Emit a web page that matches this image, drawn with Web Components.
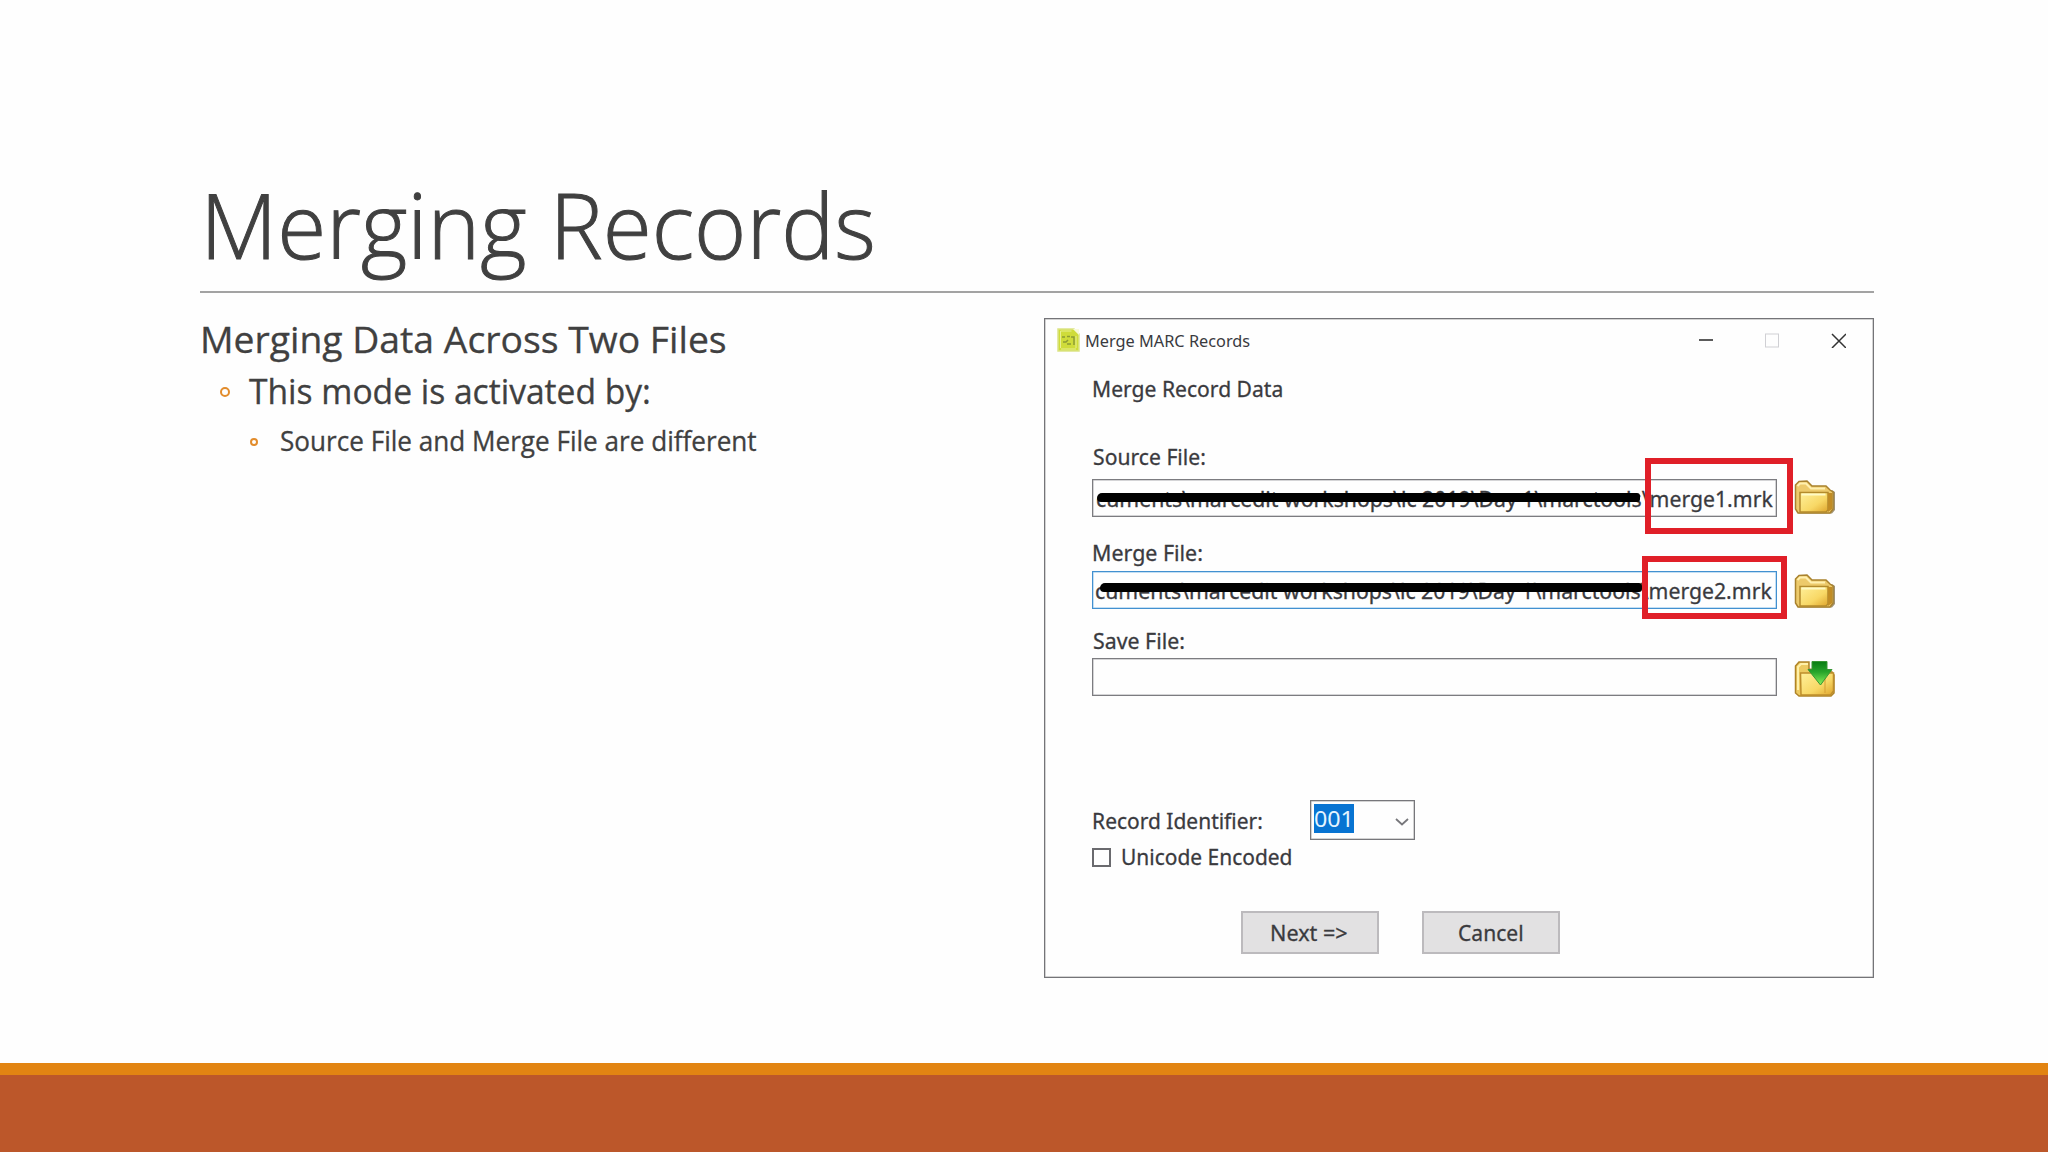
<!DOCTYPE html>
<html lang="en">
<head>
<meta charset="utf-8">
<title>Merging Records</title>
<style>
  html, body { margin: 0; height: 100%; overflow: hidden; background: #fefefe; }
</style>
</head>
<body>
<slide-page>
  <fit-text slot="title" width="663.5" style="height:65px;font:300 91px 'Open Sans',sans-serif;-webkit-text-stroke:1px">Merging Records</fit-text>
  <slide-outline slot="outline"></slide-outline>
  <merge-dialog slot="figure"></merge-dialog>
</slide-page>

<script>
(function() {

  // Build an element class from a chunk of markup
  function define(name, html, setup) {
    const template = document.createElement('template');
    template.innerHTML = html;
    customElements.define(name, class extends HTMLElement {
      constructor() {
        super();
        this.attachShadow({mode: 'open'});
        this.shadowRoot.appendChild(template.content.cloneNode(true));
      }
      connectedCallback() {
        if (setup) setup(this, this.shadowRoot);
      }
    });
  }

  const ctx = document.createElement('canvas').getContext('2d');

  // One line of text. The ink fills the given width, and the bottom
  // of the box is the baseline.
  define('fit-text', `
    <style>
      :host { display: block; flex: none; }
      span { display: block; width: max-content; transform-origin: 0 0; white-space: pre; }
    </style>
    <span><slot></slot></span>
  `, (host, root) => {
    const style = getComputedStyle(host);
    const width = Number(host.getAttribute('width'));
    const height = parseFloat(style.height);
    ctx.font = `${style.fontWeight} ${style.fontSize} ${style.fontFamily}`;
    const m = ctx.measureText(host.textContent);
    const scale = width / (m.actualBoundingBoxRight + m.actualBoundingBoxLeft);
    const dx = m.actualBoundingBoxLeft * scale;
    const dy = (height - m.fontBoundingBoxAscent + m.fontBoundingBoxDescent) / 2;
    const span = root.querySelector('span');
    host.style.width = width + 'px';
    span.style.lineHeight = height + 'px';
    span.style.transform = `translate(${dx}px, ${dy}px) scaleX(${scale})`;
  });

  define('slide-page', `
    <style>
      :host {
        display: flex;
        flex-direction: column;
        box-sizing: border-box;
        width: 2048px;
        height: 1152px;
        color: #404040;
      }
      header {
        height: 97px;
        margin: 194px 174px 0 200px;
        padding-left: 8.5px;
        border-bottom: 2px solid #a3a3a3;
      }
      main {
        flex: 1;
        display: flex;
        justify-content: space-between;
        padding: 25px 174px 0 201px;
      }
      .accent { height: 12px; background: #e28412; }
      .base { height: 77px; background: #bc572a; }
    </style>
    <header><slot name="title"></slot></header>
    <main><slot name="outline"></slot><slot name="figure"></slot></main>
    <div class="accent"></div>
    <div class="base"></div>
  `);

  define('slide-outline', `
    <style>
      :host { display: block; font-family: "Open Sans", sans-serif; -webkit-text-stroke: .3px; }
      div { display: flex; align-items: center; }
      .one { margin: 8px 0 0 1.500px; }
      .two { margin: 26px 0 0 19px; }
      .three { margin: 28px 0 0 49px; }
      .one fit-text { height: 27px; font-size: 37px; }
      .two fit-text { height: 25px; font-size: 34px; }
      .three fit-text { height: 19px; font-size: 27px; }
      i {
        box-sizing: border-box;
        border: 2px solid #e28c2c;
        border-radius: 50%;
      }
      .two i { width: 10px; height: 10px; margin-right: 19px; }
      .three i { width: 8px; height: 8px; margin-right: 23px; }
    </style>
    <div class="one"><fit-text width="522">Merging Data Across Two Files</fit-text></div>
    <div class="two"><i></i><fit-text width="400">This mode is activated by:</fit-text></div>
    <div class="three"><i></i><fit-text width="475">Source File and Merge File are different</fit-text></div>
  `);

  define('app-icon', `
    <style>:host, svg { display: block; }</style>
    <svg width="23" height="24" viewBox="0 0 23 24">
      <path d="M1 1h16l5 5v17H1z" fill="#cfdc3a" stroke="#dce486" stroke-width="1.5"/>
      <path d="M16 1l6 6v-6z" fill="#f8fad8"/>
      <path d="M3.500 3h11M3.500 3v17M4 21h15M19 8v12" stroke="#e8ef92" fill="none"/>
      <path d="M5 9h3M10 8.500h3M14 9h3v8M6 14h3l2-2M10 16h4" stroke="#8d9c34" stroke-width="1.500" fill="none"/>
    </svg>
  `);

  define('folder-icon', `
    <style>
      :host, svg { display: block; }
      .arrow { display: none; }
      :host([save]) .arrow { display: block; }
      :host([save]) .open, .closed { display: none; }
      :host([save]) .closed { display: block; }
    </style>
    <svg width="42" height="38" viewBox="0 0 42 38">
      <defs>
        <linearGradient id="front" x1="0" y1="0" x2="1" y2="1">
          <stop offset="0" stop-color="#fff09a"/>
          <stop offset=".6" stop-color="#f8d866"/>
          <stop offset="1" stop-color="#dfa52c"/>
        </linearGradient>
        <linearGradient id="green" x1="0" y1="0" x2="0" y2="1">
          <stop offset="0" stop-color="#087c12"/>
          <stop offset=".45" stop-color="#28a52b"/>
          <stop offset="1" stop-color="#8cf25a"/>
        </linearGradient>
      </defs>
      <g class="open">
        <path d="M4 34.500L38 34.500L41 31V13l-3-2z" fill="#806f45" opacity=".75"/>
        <path d="M1.500 6L5 2.500L13 2l5 5h14l4 4l3 2v17l-3 4H4L1.500 30z" fill="#edca6b" stroke="#a9822e" stroke-width="1.500"/>
        <path d="M3.500 7L6 4.500h6l5 5h14" fill="none" stroke="#fff0b0" stroke-width="2"/>
        <path d="M6 13.500h28V31l-2 2H6z" fill="url(#front)" stroke="#b48b2c" stroke-width="1.500"/>
        <path d="M34 14l4 0v16l-4 3z" fill="#c18c25"/>
        <path d="M7.500 15.500h24" stroke="#fffac6" stroke-width="2"/>
      </g>
      <g class="closed">
        <path d="M1.500 6L5 2H15v7l23 3 2 3v18l-3 3H5l-3.500-3z" fill="#edca60" stroke="#af8428" stroke-width="1.500"/>
        <path d="M4 30V7l3-3h7" fill="none" stroke="#fff0a8" stroke-width="2"/>
        <path d="M6.500 13h33v18l-3 4H7z" fill="url(#front)" stroke="#bd8d2b" stroke-width="1.500"/>
        <path d="M31 15v18" stroke="#d49d35"/>
      </g>
      <path class="arrow" d="M18 1.500h15v8h5L26.500 25L14 9.500h4z" fill="url(#green)" stroke="#389634"/>
    </svg>
  `);

  define('file-field', `
    <style>
      :host { display: flex; height: 38px; }
      .box {
        position: relative;
        box-sizing: border-box;
        width: 685px;
        border: 1px solid #7c7c80;
        box-shadow: inset 0 0 0 .5px #aaaaae;
        padding: 11px 0 0 4px;
      }
      :host([focused]) .box {
        padding-left: 3px;
        border-color: #4290d0;
        box-shadow: inset 0 0 0 .5px #8ac0e8;
      }
      fit-text { height: 16px; font-size: 22px; }
      .strike {
        position: absolute;
        left: 4px;
        top: 13px;
        width: 543px;
        height: 9px;
        border-radius: 5px 3px 3px 4px;
        background: #000;
      }
      :host([focused]) .strike { top: 11px; left: 7px; width: 542px; }
      .mark {
        position: absolute;
        box-sizing: border-box;
        left: 552px;
        top: -22px;
        width: 148px;
        height: 76px;
        border: 6px solid #e01f28;
      }
      :host([focused]) .mark { left: 549px; top: -16px; width: 145px; height: 63px; }
      folder-icon { margin-left: 17px; }
      :host([focused]) folder-icon { margin-top: 2px; }
      :host([save]) folder-icon { margin-top: 2px; }
    </style>
    <div class="box"></div>
    <folder-icon></folder-icon>
  `, (host, root) => {
    if (host.hasAttribute('save'))
      root.querySelector('folder-icon').setAttribute('save', '');
    const path = host.getAttribute('path');
    if (!path)
      return;
    const text = document.createElement('fit-text');
    text.setAttribute('width', '676');
    text.textContent = path;
    root.querySelector('.box').append(text);
    for (const name of ['strike', 'mark']) {
      const overlay = document.createElement('div');
      overlay.className = name;
      root.querySelector('.box').append(overlay);
    }
  });

  define('dialog-button', `
    <style>
      :host {
        display: flex;
        justify-content: center;
        box-sizing: border-box;
        width: 138px;
        height: 43px;
        padding: 12px 2px 0 0;
        border: 2px solid #bcbabd;
        background: #e2e1e2;
      }
    </style>
    <slot></slot>
  `);

  define('merge-dialog', `
    <style>
      :host {
        display: flex;
        flex-direction: column;
        box-sizing: border-box;
        width: 830px;
        height: 660px;
        border: 1px solid #747478;
        box-shadow: inset 0 0 0 .5px #a8a8a8;
        font: 22px "Noto Sans", sans-serif;
        color: #3a3a3e;
        -webkit-text-stroke: .3px;
      }
      fit-text { height: 16px; }
      .bar { display: flex; align-items: center; height: 42px; padding: 0 27px 0 12px; }
      .bar fit-text { height: 12px; margin: 1px auto 0 6px; font-size: 17px; -webkit-text-stroke: 0; }
      .bar svg { display: block; }
      .body { display: flex; flex-direction: column; padding: 0 0 0 47px; }
      .body > fit-text { margin-left: 2px; }
      .heading { margin-top: 20px; }
      .source { margin-top: 52px; }
      .merge { margin-top: 28px; }
      .save { margin-top: 24px; }
      .source + file-field { margin-top: 14px; }
      .merge + file-field { margin-top: 10px; }
      .save + file-field { margin-top: 9px; }
      .row { display: flex; align-items: flex-start; }
      .record { margin-top: 104px; }
      .record > fit-text { margin: 13px 0 0 2px; }
      .combo {
        display: flex;
        align-items: flex-start;
        justify-content: space-between;
        box-sizing: border-box;
        width: 105px;
        height: 40px;
        margin-left: 48px;
        padding: 3px 5px 0 3px;
        border: 1px solid #77777b;
        box-shadow: inset 0 0 0 .5px #a8a8a8;
      }
      .chosen { width: 40px; height: 29px; background: #0874d2; color: #e4f4ff; -webkit-text-stroke: 0; }
      .chosen fit-text { margin: 7px 0 0 1px; }
      .combo svg { margin-top: 13px; }
      .check { margin-top: 8px; }
      .tick { box-sizing: border-box; width: 19px; height: 19px; border: 2px solid #6a6a6e; }
      .check fit-text { margin: 1px 0 0 10.500px; }
      .buttons { display: flex; gap: 43px; margin: 44px 0 0 149px; }
    </style>
    <div class="bar">
      <app-icon></app-icon>
      <fit-text width="164">Merge MARC Records</fit-text>
      <svg width="148" height="16" viewBox="0 0 148 16" fill="none">
        <path d="M1 8h14" stroke="#333" stroke-width="1.600"/>
        <rect x="67.500" y="2" width="13" height="13" stroke="#d0d0d4"/>
        <path d="M134 2l14 14M148 2l-14 14" stroke="#333" stroke-width="1.500"/>
      </svg>
    </div>
    <div class="body">
      <fit-text class="heading" width="188">Merge Record Data</fit-text>
      <fit-text class="source" width="111">Source File:</fit-text>
      <file-field path="cuments\\marcedit workshops\\lc 2019\\Day 1\\marctools\\merge1.mrk"></file-field>
      <fit-text class="merge" width="108">Merge File:</fit-text>
      <file-field focused path="cuments\\marcedit workshops\\lc 2019\\Day 1\\marctools\\merge2.mrk"></file-field>
      <fit-text class="save" width="90">Save File:</fit-text>
      <file-field save></file-field>
      <div class="row record">
        <fit-text width="168">Record Identifier:</fit-text>
        <div class="combo">
          <div class="chosen"><fit-text width="34">001</fit-text></div>
          <svg width="14" height="10" viewBox="0 0 14 10"><path d="M1 2l6 5.500L13 2" fill="none" stroke="#77777b" stroke-width="1.800"/></svg>
        </div>
      </div>
      <div class="row check">
        <div class="tick"></div>
        <fit-text width="169">Unicode Encoded</fit-text>
      </div>
      <div class="buttons">
        <dialog-button><fit-text width="75">Next =&gt;</fit-text></dialog-button>
        <dialog-button><fit-text width="63">Cancel</fit-text></dialog-button>
      </div>
    </div>
  `);
})();
</script>
</body>
</html>
